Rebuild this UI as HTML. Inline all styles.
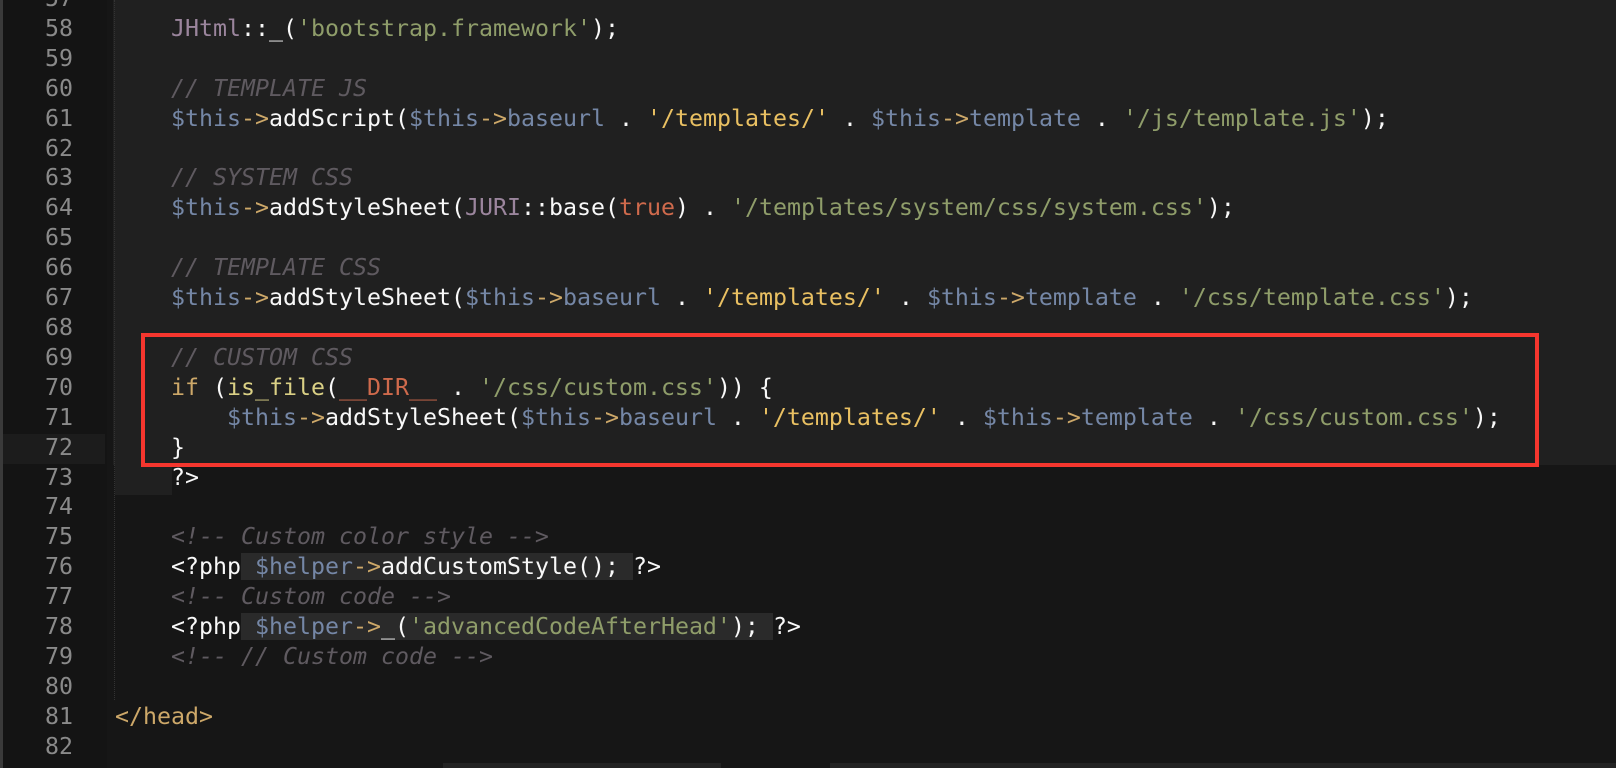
<!DOCTYPE html>
<html><head><meta charset="utf-8"><style>
html,body{margin:0;padding:0;width:1616px;height:768px;overflow:hidden;background:#161616;}
.g{position:absolute;left:0;top:0;width:107px;height:768px;background:#141414;border-left:3px solid #3a3a3a;box-sizing:border-box;}
.up{position:absolute;left:113px;top:0;width:1503px;height:465px;background:#202020;}
.up2{position:absolute;left:115px;top:465px;width:57px;height:30px;background:#202020;}
.hl72{position:absolute;left:3px;top:434px;width:102px;height:30px;background:#1c1c1c;}
.guide{position:absolute;left:114px;top:0;height:700px;border-left:1px dotted #333;}
.ln{position:absolute;left:0;width:73px;text-align:right;color:#8a8a8a;}
.c{position:absolute;left:115px;white-space:pre;}
.ln,.c{font-family:"DejaVu Sans Mono","Liberation Mono",monospace;font-size:23.25px;line-height:30px;height:30px;}
.cm{color:#5f5a60;font-style:italic}
.s{color:#8f9d6a}.y{color:#e9c062}.v{color:#7587a6}.a{color:#cda869}.w{color:#f8f8f8}
.p{color:#9b859d}.o{color:#cf6a4c}.f{color:#dad085}.k{color:#cda869}
.sel{background:#2a2a2a}
.box{position:absolute;left:141px;top:333px;width:1398px;height:134px;border:4px solid #f5362e;box-sizing:border-box;}
.sb1{position:absolute;left:443px;top:763px;width:278px;height:5px;background:#232323}
.sb2{position:absolute;left:830px;top:763px;width:786px;height:5px;background:#232323}
</style></head><body>
<div class="g"></div><div class="up"></div><div class="up2"></div><div class="hl72"></div><div class="guide"></div>
<div class="ln" style="top:-16px">57</div>
<div class="ln" style="top:14px">58</div>
<div class="ln" style="top:44px">59</div>
<div class="ln" style="top:74px">60</div>
<div class="ln" style="top:104px">61</div>
<div class="ln" style="top:134px">62</div>
<div class="ln" style="top:163px">63</div>
<div class="ln" style="top:193px">64</div>
<div class="ln" style="top:223px">65</div>
<div class="ln" style="top:253px">66</div>
<div class="ln" style="top:283px">67</div>
<div class="ln" style="top:313px">68</div>
<div class="ln" style="top:343px">69</div>
<div class="ln" style="top:373px">70</div>
<div class="ln" style="top:403px">71</div>
<div class="ln" style="top:433px">72</div>
<div class="ln" style="top:463px">73</div>
<div class="ln" style="top:492px">74</div>
<div class="ln" style="top:522px">75</div>
<div class="ln" style="top:552px">76</div>
<div class="ln" style="top:582px">77</div>
<div class="ln" style="top:612px">78</div>
<div class="ln" style="top:642px">79</div>
<div class="ln" style="top:672px">80</div>
<div class="ln" style="top:702px">81</div>
<div class="ln" style="top:732px">82</div>

<div class="c" style="top:14px">    <span class="p">JHtml</span><span class="w">::_(</span><span class="s">'bootstrap.framework'</span><span class="w">);</span></div>
<div class="c cm" style="top:74px">    // TEMPLATE JS</div>
<div class="c" style="top:104px">    <span class="v">$this</span><span class="a">-&gt;</span><span class="w">addScript(</span><span class="v">$this</span><span class="a">-&gt;</span><span class="v">baseurl</span><span class="w"> . </span><span class="y">'/templates/'</span><span class="w"> . </span><span class="v">$this</span><span class="a">-&gt;</span><span class="v">template</span><span class="w"> . </span><span class="s">'/js/template.js'</span><span class="w">);</span></div>
<div class="c cm" style="top:163px">    // SYSTEM CSS</div>
<div class="c" style="top:193px">    <span class="v">$this</span><span class="a">-&gt;</span><span class="w">addStyleSheet(</span><span class="p">JURI</span><span class="w">::base(</span><span class="o">true</span><span class="w">) . </span><span class="s">'/templates/system/css/system.css'</span><span class="w">);</span></div>
<div class="c cm" style="top:253px">    // TEMPLATE CSS</div>
<div class="c" style="top:283px">    <span class="v">$this</span><span class="a">-&gt;</span><span class="w">addStyleSheet(</span><span class="v">$this</span><span class="a">-&gt;</span><span class="v">baseurl</span><span class="w"> . </span><span class="y">'/templates/'</span><span class="w"> . </span><span class="v">$this</span><span class="a">-&gt;</span><span class="v">template</span><span class="w"> . </span><span class="s">'/css/template.css'</span><span class="w">);</span></div>
<div class="c cm" style="top:343px">    // CUSTOM CSS</div>
<div class="c" style="top:373px">    <span class="k">if</span><span class="w"> (</span><span class="f">is_file</span><span class="w">(</span><span class="o">__DIR__</span><span class="w"> . </span><span class="s">'/css/custom.css'</span><span class="w">)) {</span></div>
<div class="c" style="top:403px">        <span class="v">$this</span><span class="a">-&gt;</span><span class="w">addStyleSheet(</span><span class="v">$this</span><span class="a">-&gt;</span><span class="v">baseurl</span><span class="w"> . </span><span class="y">'/templates/'</span><span class="w"> . </span><span class="v">$this</span><span class="a">-&gt;</span><span class="v">template</span><span class="w"> . </span><span class="s">'/css/custom.css'</span><span class="w">);</span></div>
<div class="c" style="top:433px">    <span class="w">}</span></div>
<div class="c" style="top:463px">    <span class="w">?&gt;</span></div>
<div class="c cm" style="top:522px">    &lt;!-- Custom color style --&gt;</div>
<div class="c" style="top:552px">    <span class="w">&lt;?php</span><span class="sel"> <span class="v">$helper</span><span class="a">-&gt;</span><span class="w">addCustomStyle(); </span></span><span class="w">?&gt;</span></div>
<div class="c cm" style="top:582px">    &lt;!-- Custom code --&gt;</div>
<div class="c" style="top:612px">    <span class="w">&lt;?php</span><span class="sel"> <span class="v">$helper</span><span class="a">-&gt;</span><span class="w">_(</span><span class="s">'advancedCodeAfterHead'</span><span class="w">); </span></span><span class="w">?&gt;</span></div>
<div class="c cm" style="top:642px">    &lt;!-- // Custom code --&gt;</div>
<div class="c" style="top:702px"><span class="a">&lt;/head&gt;</span></div>
<div class="box"></div>
<div class="sb1"></div><div class="sb2"></div>
</body></html>
